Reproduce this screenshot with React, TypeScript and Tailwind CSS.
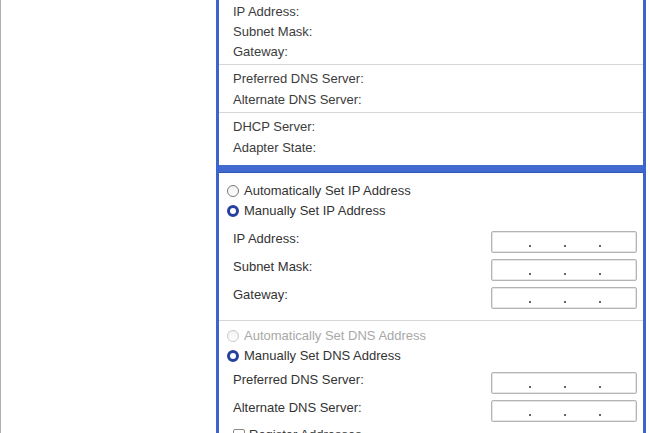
const font = { fontFamily: '"Liberation Sans", Arial, sans-serif' }

const InfoRow = ({ label, h = 'h-[20px]' }: { label: string; h?: string }) => (
  <div className={`${h} flex items-center pl-[14px] text-[13px] text-[#3c3c3c]`}>{label}</div>
)

const Radio = ({ label, checked, disabled }: { label: string; checked?: boolean; disabled?: boolean }) => (
  <div className="h-[20px] flex items-center pl-[8px] gap-[5px] text-[13px]">
    {checked ? (
      <span className="w-[12px] h-[12px] rounded-full border-[3px] border-[#26409e] bg-white" />
    ) : (
      <span className={`w-[12px] h-[12px] rounded-full border ${disabled ? 'border-[#c8c8c8]' : 'border-[#7a7a7a]'} bg-gradient-to-b from-[#f2f2f2] to-white`} />
    )}
    <span className={disabled ? 'text-[#a8a8a8]' : 'text-[#333]'}>{label}</span>
  </div>
)

const IpField = ({ label }: { label: string }) => (
  <div className="h-[22px] flex items-center justify-between pr-[6px]">
    <span className="pl-[14px] mb-[6px] text-[13px] text-[#333]">{label}</span>
    <div className="w-[146px] h-[22px] rounded-[2px] border border-[#b4b4b4] shadow-[inset_0_0_0_1px_#e6e6e6] bg-white flex items-end pb-[5px] pl-[37px] gap-[33px]">
      <span className="w-[2px] h-[2px] bg-[#666]" />
      <span className="w-[2px] h-[2px] bg-[#666]" />
      <span className="w-[2px] h-[2px] bg-[#666]" />
    </div>
  </div>
)

export default function App() {
  return (
    <div className="w-[650px] h-[433px] overflow-hidden bg-white flex" style={font}>
      <div className="w-[216px] h-full border-l border-[#b0b0b0] bg-white shrink-0" />
      <div className="w-[430px] h-full shrink-0 border-l-[3px] border-r-[3px] border-[#3d64cc] flex flex-col">
        {/* status */}
        <div className="pt-[2px] shrink-0">
          <div className="pb-[2px] border-b border-[#d6d6d6]">
            <InfoRow label="IP Address:" />
            <InfoRow label="Subnet Mask:" />
            <InfoRow label="Gateway:" />
          </div>
          <div className="pt-[3px] pb-[2px] border-b border-[#d6d6d6]">
            <InfoRow label="Preferred DNS Server:" h="h-[21px]" />
            <InfoRow label="Alternate DNS Server:" h="h-[21px]" />
          </div>
          <div className="pt-[3px] pb-[7px]">
            <InfoRow label="DHCP Server:" h="h-[21px]" />
            <InfoRow label="Adapter State:" h="h-[21px]" />
          </div>
        </div>
        <div className="h-[8px] shrink-0 bg-[#4169d0] border-b border-[#2f54b8]" />
        {/* settings */}
        <div className="pt-[8px] shrink-0">
          <Radio label="Automatically Set IP Address" />
          <Radio label="Manually Set IP Address" checked />
          <div className="mt-[10px] flex flex-col gap-[6px]">
            <IpField label="IP Address:" />
            <IpField label="Subnet Mask:" />
            <IpField label="Gateway:" />
          </div>
          <div className="mt-[11px] border-t border-[#d6d6d6] pt-[5px]">
            <Radio label="Automatically Set DNS Address" disabled />
            <Radio label="Manually Set DNS Address" checked />
            <div className="mt-[6px] flex flex-col gap-[6px]">
              <IpField label="Preferred DNS Server:" />
              <IpField label="Alternate DNS Server:" />
            </div>
            <div className="mt-[5px] h-[16px] flex items-center pl-[14px] gap-[4px] text-[13px] text-[#333]">
              <span className="w-[12px] h-[12px] rounded-[2px] border border-[#8a8a8a] bg-white" />
              <span>Register Addresses</span>
            </div>
          </div>
        </div>
      </div>
    </div>
  )
}
